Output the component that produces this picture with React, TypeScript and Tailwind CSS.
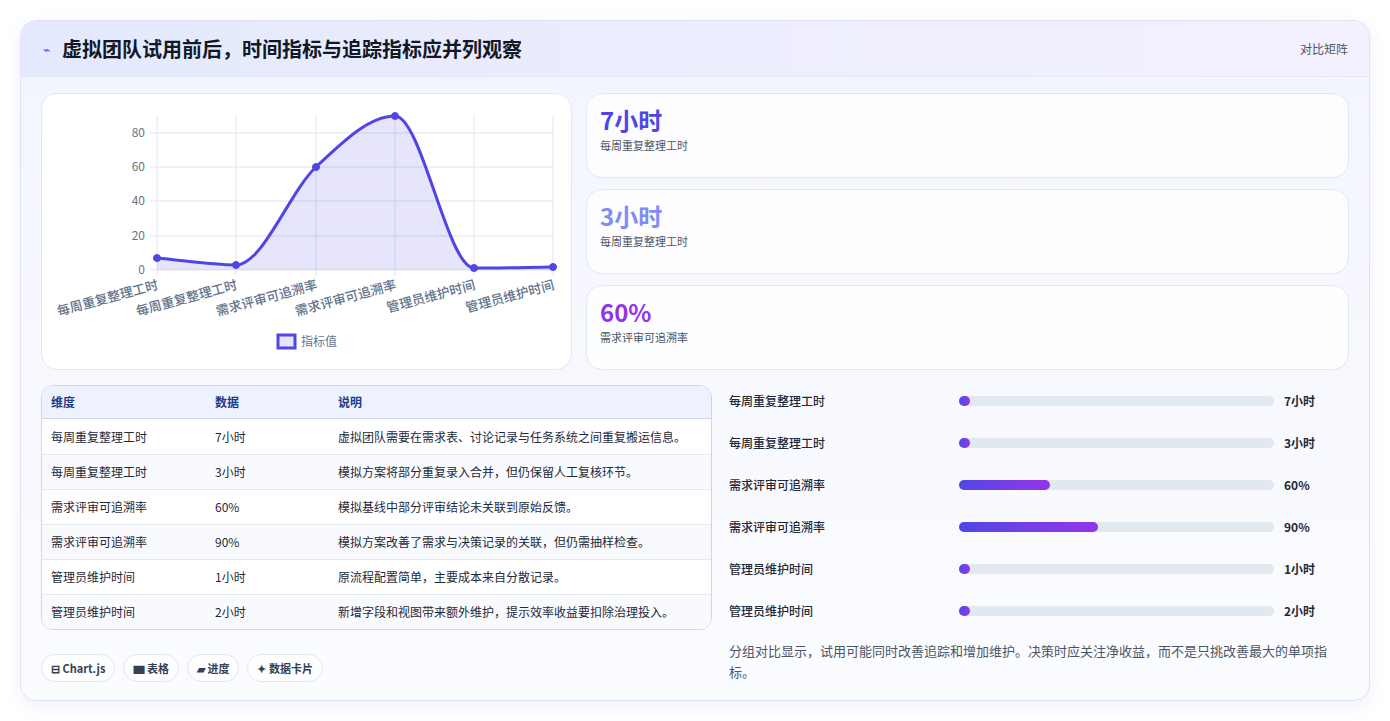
import React from 'react'

const font = { fontFamily: '"Noto Sans CJK SC", "Noto Sans", sans-serif' }

const pts = [
  [115, 164], [194, 171], [274, 73], [353, 22], [432, 174], [511, 173],
]
const labels = ['每周重复整理工时', '每周重复整理工时', '需求评审可追溯率', '需求评审可追溯率', '管理员维护时间', '管理员维护时间']

// monotone cubic so the line never overshoots the points
function curve() {
  const n = pts.length
  const s = pts.slice(0, -1).map((p, i) => (pts[i + 1][1] - p[1]) / (pts[i + 1][0] - p[0]))
  const m = pts.map((_, i) => {
    if (i === 0) return s[0]
    if (i === n - 1) return s[n - 2]
    if (s[i - 1] * s[i] <= 0) return 0
    return (s[i - 1] + s[i]) / 2
  })
  let d = `M${pts[0][0]},${pts[0][1]}`
  for (let i = 0; i < n - 1; i++) {
    const h = (pts[i + 1][0] - pts[i][0]) / 3
    d += ` C${pts[i][0] + h},${pts[i][1] + m[i] * h} ${pts[i + 1][0] - h},${pts[i + 1][1] - m[i + 1] * h} ${pts[i + 1][0]},${pts[i + 1][1]}`
  }
  return d
}

function Chart() {
  const d = curve()
  return (
    <svg width="531" height="277" className="block">
      {[176, 142, 107, 73, 39].map((y, i) => (
        <g key={y}>
          <line x1="108" x2="511" y1={y} y2={y} stroke="#e2e5ef" />
          <text x="103" y={y + 4} textAnchor="end" fontSize="12" fill="#6b7280">{i * 20}</text>
        </g>
      ))}
      {pts.map(([x]) => <line key={x} x1={x} x2={x} y1="22" y2="182" stroke="#e2e5ef" />)}
      <path d={`${d} L511,176 L115,176 Z`} fill="rgba(79,70,229,0.14)" />
      <path d={d} fill="none" stroke="#4f46e5" strokeWidth="3" />
      {pts.map(([x, y]) => <circle key={x} cx={x} cy={y} r="3.5" fill="#4f46e5" stroke="#4f46e5" />)}
      {pts.map(([x], i) => (
        <text key={i} x={x + 2} y="195" transform={`rotate(-15 ${x + 2} 195)`} textAnchor="end" fontSize="13" fontWeight="500" fill="#64748b">{labels[i]}</text>
      ))}
      <rect x="236" y="241" width="17" height="13" fill="rgba(79,70,229,0.14)" stroke="#4f46e5" strokeWidth="3" />
      <text x="259" y="252" fontSize="12" fill="#64748b">指标值</text>
    </svg>
  )
}

const rows = [
  ['每周重复整理工时', '7小时', '虚拟团队需要在需求表、讨论记录与任务系统之间重复搬运信息。'],
  ['每周重复整理工时', '3小时', '模拟方案将部分重复录入合并，但仍保留人工复核环节。'],
  ['需求评审可追溯率', '60%', '模拟基线中部分评审结论未关联到原始反馈。'],
  ['需求评审可追溯率', '90%', '模拟方案改善了需求与决策记录的关联，但仍需抽样检查。'],
  ['管理员维护时间', '1小时', '原流程配置简单，主要成本来自分散记录。'],
  ['管理员维护时间', '2小时', '新增字段和视图带来额外维护，提示效率收益要扣除治理投入。'],
]
const bars = [
  ['每周重复整理工时', '7小时', 3.5],
  ['每周重复整理工时', '3小时', 3.5],
  ['需求评审可追溯率', '60%', 29],
  ['需求评审可追溯率', '90%', 44],
  ['管理员维护时间', '1小时', 3.5],
  ['管理员维护时间', '2小时', 3.5],
] as const

const stats = [
  ['7小时', '每周重复整理工时', 'text-[#4f46e5]'],
  ['3小时', '每周重复整理工时', 'text-[#818cf8]'],
  ['60%', '需求评审可追溯率', 'text-[#9333ea]'],
]

export default function App() {
  return (
    <div style={font} className="w-[1390px] h-[721px] bg-white p-5">
      <div className="h-[681px] w-[1350px] rounded-2xl border border-[#dfe3f5] bg-gradient-to-b from-[#f3f5fe] to-[#fbfcff] shadow-[0_6px_18px_rgba(79,70,229,0.08)] overflow-hidden">
        <div className="h-14 flex items-center justify-between px-5 bg-gradient-to-r from-[#e4e9fd] to-[#f4f1fe] border-b border-[#e3e7f7]">
          <div className="flex items-center gap-3">
            <span className="text-[#4f46e5] text-[12px] ml-[2px]">⌁</span>
            <span className="text-[20px] font-bold text-[#111827]">虚拟团队试用前后，时间指标与追踪指标应并列观察</span>
          </div>
          <span className="text-xs text-[#4b5563] mr-[1px]">对比矩阵</span>
        </div>
        <div className="px-5 pt-4">
          <div className="flex gap-[14px]">
            <div className="w-[531px] h-[277px] rounded-2xl bg-white border border-[#e3e7f3]">
              <Chart />
            </div>
            <div className="flex-1 flex flex-col gap-[11px]">
              {stats.map(([v, l, c], i) => (
                <div key={i} className="h-[85px] rounded-2xl bg-white/80 border border-[#e3e7f3] px-[13px] pt-[9px]">
                  <div className={`text-[24px] font-bold leading-[34px] ${c}`}>{v}</div>
                  <div className="text-[11px] text-[#4b5563]">{l}</div>
                </div>
              ))}
            </div>
          </div>
          <div className="flex gap-[13px] mt-[15px]">
            <div className="w-[681px]">
              <div className="rounded-xl border border-[#cfd6ea] overflow-hidden bg-white">
                <div className="flex h-[33px] items-center bg-[#eef2fe] border-b border-[#cfd6ea] text-xs font-semibold text-[#1e3a8a]">
                  <div className="w-[163px] pl-[9px]">维度</div>
                  <div className="w-[123px] pl-[10px]">数据</div>
                  <div className="pl-[10px]">说明</div>
                </div>
                {rows.map((r, i) => (
                  <div key={i} className={`flex h-[35px] items-center text-xs text-[#1f2937] ${i ? 'border-t border-[#e5e8f0]' : ''} ${i % 2 ? 'bg-[#f8fafd]' : 'bg-white'}`}>
                    <div className="w-[163px] pl-[9px]">{r[0]}</div>
                    <div className="w-[123px] pl-[10px]">{r[1]}</div>
                    <div className="pl-[10px]">{r[2]}</div>
                  </div>
                ))}
              </div>
              <div className="flex gap-2 mt-6">
                {['⊟ Chart.js', '▆ 表格', '▰ 进度', '✦ 数据卡片'].map(t => (
                  <span key={t} className="h-[28px] px-[9px] flex items-center rounded-full border border-[#e3e7f3] bg-white/70 text-[11px] font-semibold text-[#374151]">{t}</span>
                ))}
              </div>
            </div>
            <div className="flex-1 pl-1 -mt-[5px]">
              <div className="flex flex-col">
                {bars.map(([l, v, w], i) => (
                  <div key={i} className="h-[42px] flex items-center">
                    <div className="w-[230px] text-xs font-medium text-[#1f2937]">{l}</div>
                    <div className="w-[315px] h-[10px] rounded-full bg-[#e2e8f0]">
                      <div className="h-full rounded-full bg-gradient-to-r from-[#4f46e5] to-[#9333ea]" style={{ width: `${w}%` }} />
                    </div>
                    <div className="ml-[10px] text-xs font-bold text-[#1f2937]">{v}</div>
                  </div>
                ))}
              </div>
              <p className="mt-[8px] text-[13px] leading-[21px] text-[#4b5563] w-[620px]">分组对比显示，试用可能同时改善追踪和增加维护。决策时应关注净收益，而不是只挑改善最大的单项指标。</p>
            </div>
          </div>
        </div>
      </div>
    </div>
  )
}
